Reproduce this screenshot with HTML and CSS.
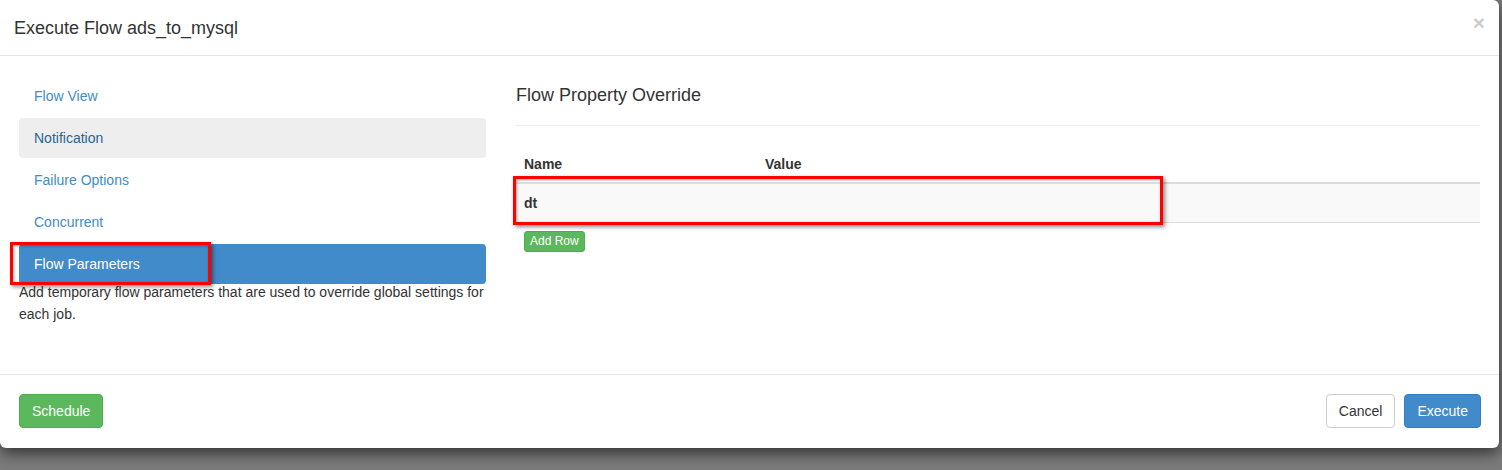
FILE: index.html
```html
<!DOCTYPE html>
<html>
<head>
<meta charset="utf-8">
<title>Execute Flow</title>
<link rel="stylesheet" href="styles.css">
</head>
<body>
<div class="modal">
  <div class="modal-header">
    <h4 class="modal-title">Execute Flow ads_to_mysql</h4>
    <span class="close">&times;</span>
  </div>
  <div class="modal-body">
    <div class="side">
      <ul class="nav">
        <li class="nav-item">Flow View</li>
        <li class="nav-item hover">Notification</li>
        <li class="nav-item">Failure Options</li>
        <li class="nav-item">Concurrent</li>
        <li class="nav-item active">Flow Parameters</li>
      </ul>
      <p class="desc">Add temporary flow parameters that are used to override global settings for each job.</p>
    </div>
    <div class="main">
      <h3 class="section-title">Flow Property Override</h3>
      <hr class="divider">
      <table class="props">
        <thead>
          <tr><th class="col-name">Name</th><th>Value</th></tr>
        </thead>
        <tbody>
          <tr class="striped"><td class="col-name key">dt</td><td></td></tr>
        </tbody>
      </table>
      <button class="btn btn-success btn-xs">Add Row</button>
    </div>
  </div>
  <div class="modal-footer">
    <button class="btn btn-success">Schedule</button>
    <div class="right-btns">
      <button class="btn btn-default">Cancel</button>
      <button class="btn btn-primary">Execute</button>
    </div>
  </div>
  <div class="mark mark-nav"></div>
  <div class="mark mark-row"></div>
</div>
</body>
</html>
```

FILE: styles.css
```css
html, body {
  margin: 0;
  padding: 0;
}
body {
  background: #7b7b7b;
  font-family: "Liberation Sans", Arial, sans-serif;
  font-size: 14px;
  line-height: 20px;
  color: #333;
  width: 1502px;
  height: 470px;
  overflow: hidden;
}
.modal {
  position: relative;
  width: 1499px;
  height: 448px;
  background: #fff;
  border-radius: 0 6px 6px 6px;
  box-shadow: 0 5px 15px rgba(0, 0, 0, 0.6);
  display: flex;
  flex-direction: column;
}
.modal-header {
  height: 55px;
  border-bottom: 1px solid #e5e5e5;
  display: flex;
  align-items: center;
  justify-content: space-between;
  padding: 0 14px 0 14px;
}
.modal-title {
  margin: 0;
  font-size: 18px;
  font-weight: normal;
  line-height: 22px;
  color: #333;
}
.close {
  font-size: 21px;
  font-weight: bold;
  color: #000;
  opacity: 0.2;
  line-height: 1;
  position: relative;
  top: -5px;
}
.modal-body {
  height: 318px;
  box-sizing: border-box;
  padding: 20px 19px 0 19px;
  display: grid;
  grid-template-columns: 467px 1fr;
  column-gap: 30px;
}
.nav {
  list-style: none;
  margin: 0;
  padding: 0;
  display: flex;
  flex-direction: column;
  gap: 2px;
}
.nav-item {
  padding: 10px 15px;
  line-height: 20px;
  color: #428bca;
  border-radius: 4px;
}
.nav-item.hover {
  background: #eee;
  color: #2a6496;
}
.nav-item.active {
  background: #428bca;
  color: #fff;
}
.desc {
  margin: -3px 0 0 0;
  line-height: 22px;
}
.section-title {
  margin: 9px 0 0 0;
  font-size: 18px;
  font-weight: normal;
  line-height: 20px;
  color: #333;
}
.divider {
  border: 0;
  border-top: 1px solid #eee;
  margin: 20px 0 0 0;
}
.props {
  width: 100%;
  border-collapse: collapse;
  margin-top: 20px;
}
.props th {
  text-align: left;
  font-weight: bold;
  padding: 8px;
  line-height: 20px;
  border-bottom: 2px solid #ddd;
}
.props td {
  padding: 9px 8px;
  line-height: 20px;
  border-bottom: 1px solid #ddd;
}
.props .col-name {
  width: 225px;
}
.props .key {
  font-weight: bold;
}
.striped td {
  background: #f9f9f9;
}
.btn {
  font-family: "Liberation Sans", Arial, sans-serif;
  font-size: 14px;
  line-height: 20px;
  padding: 6px 12px;
  border: 1px solid transparent;
  border-radius: 4px;
  cursor: pointer;
}
.btn-success {
  background: #5cb85c;
  border-color: #4cae4c;
  color: #fff;
}
.btn-primary {
  background: #428bca;
  border-color: #357ebd;
  color: #fff;
}
.btn-default {
  background: #fff;
  border-color: #ccc;
  color: #333;
}
.btn-xs {
  font-size: 12px;
  line-height: 17px;
  padding: 1px 5px;
  border-radius: 3px;
  margin: 8px 0 0 8px;
}
.modal-footer {
  border-top: 1px solid #e5e5e5;
  padding: 19px 18px 20px 19px;
  display: flex;
  justify-content: space-between;
  align-items: center;
}
.right-btns {
  display: flex;
  gap: 9px;
}
.mark {
  position: absolute;
  border: 3px solid #ff0000;
  box-sizing: border-box;
  box-shadow: 2px 2px 4px rgba(0, 0, 0, 0.45), inset 1px 1px 3px rgba(0, 0, 0, 0.35);
}
.mark-nav {
  left: 10px;
  top: 242px;
  width: 201px;
  height: 43px;
}
.mark-row {
  left: 513px;
  top: 176px;
  width: 650px;
  height: 49px;
}
```
